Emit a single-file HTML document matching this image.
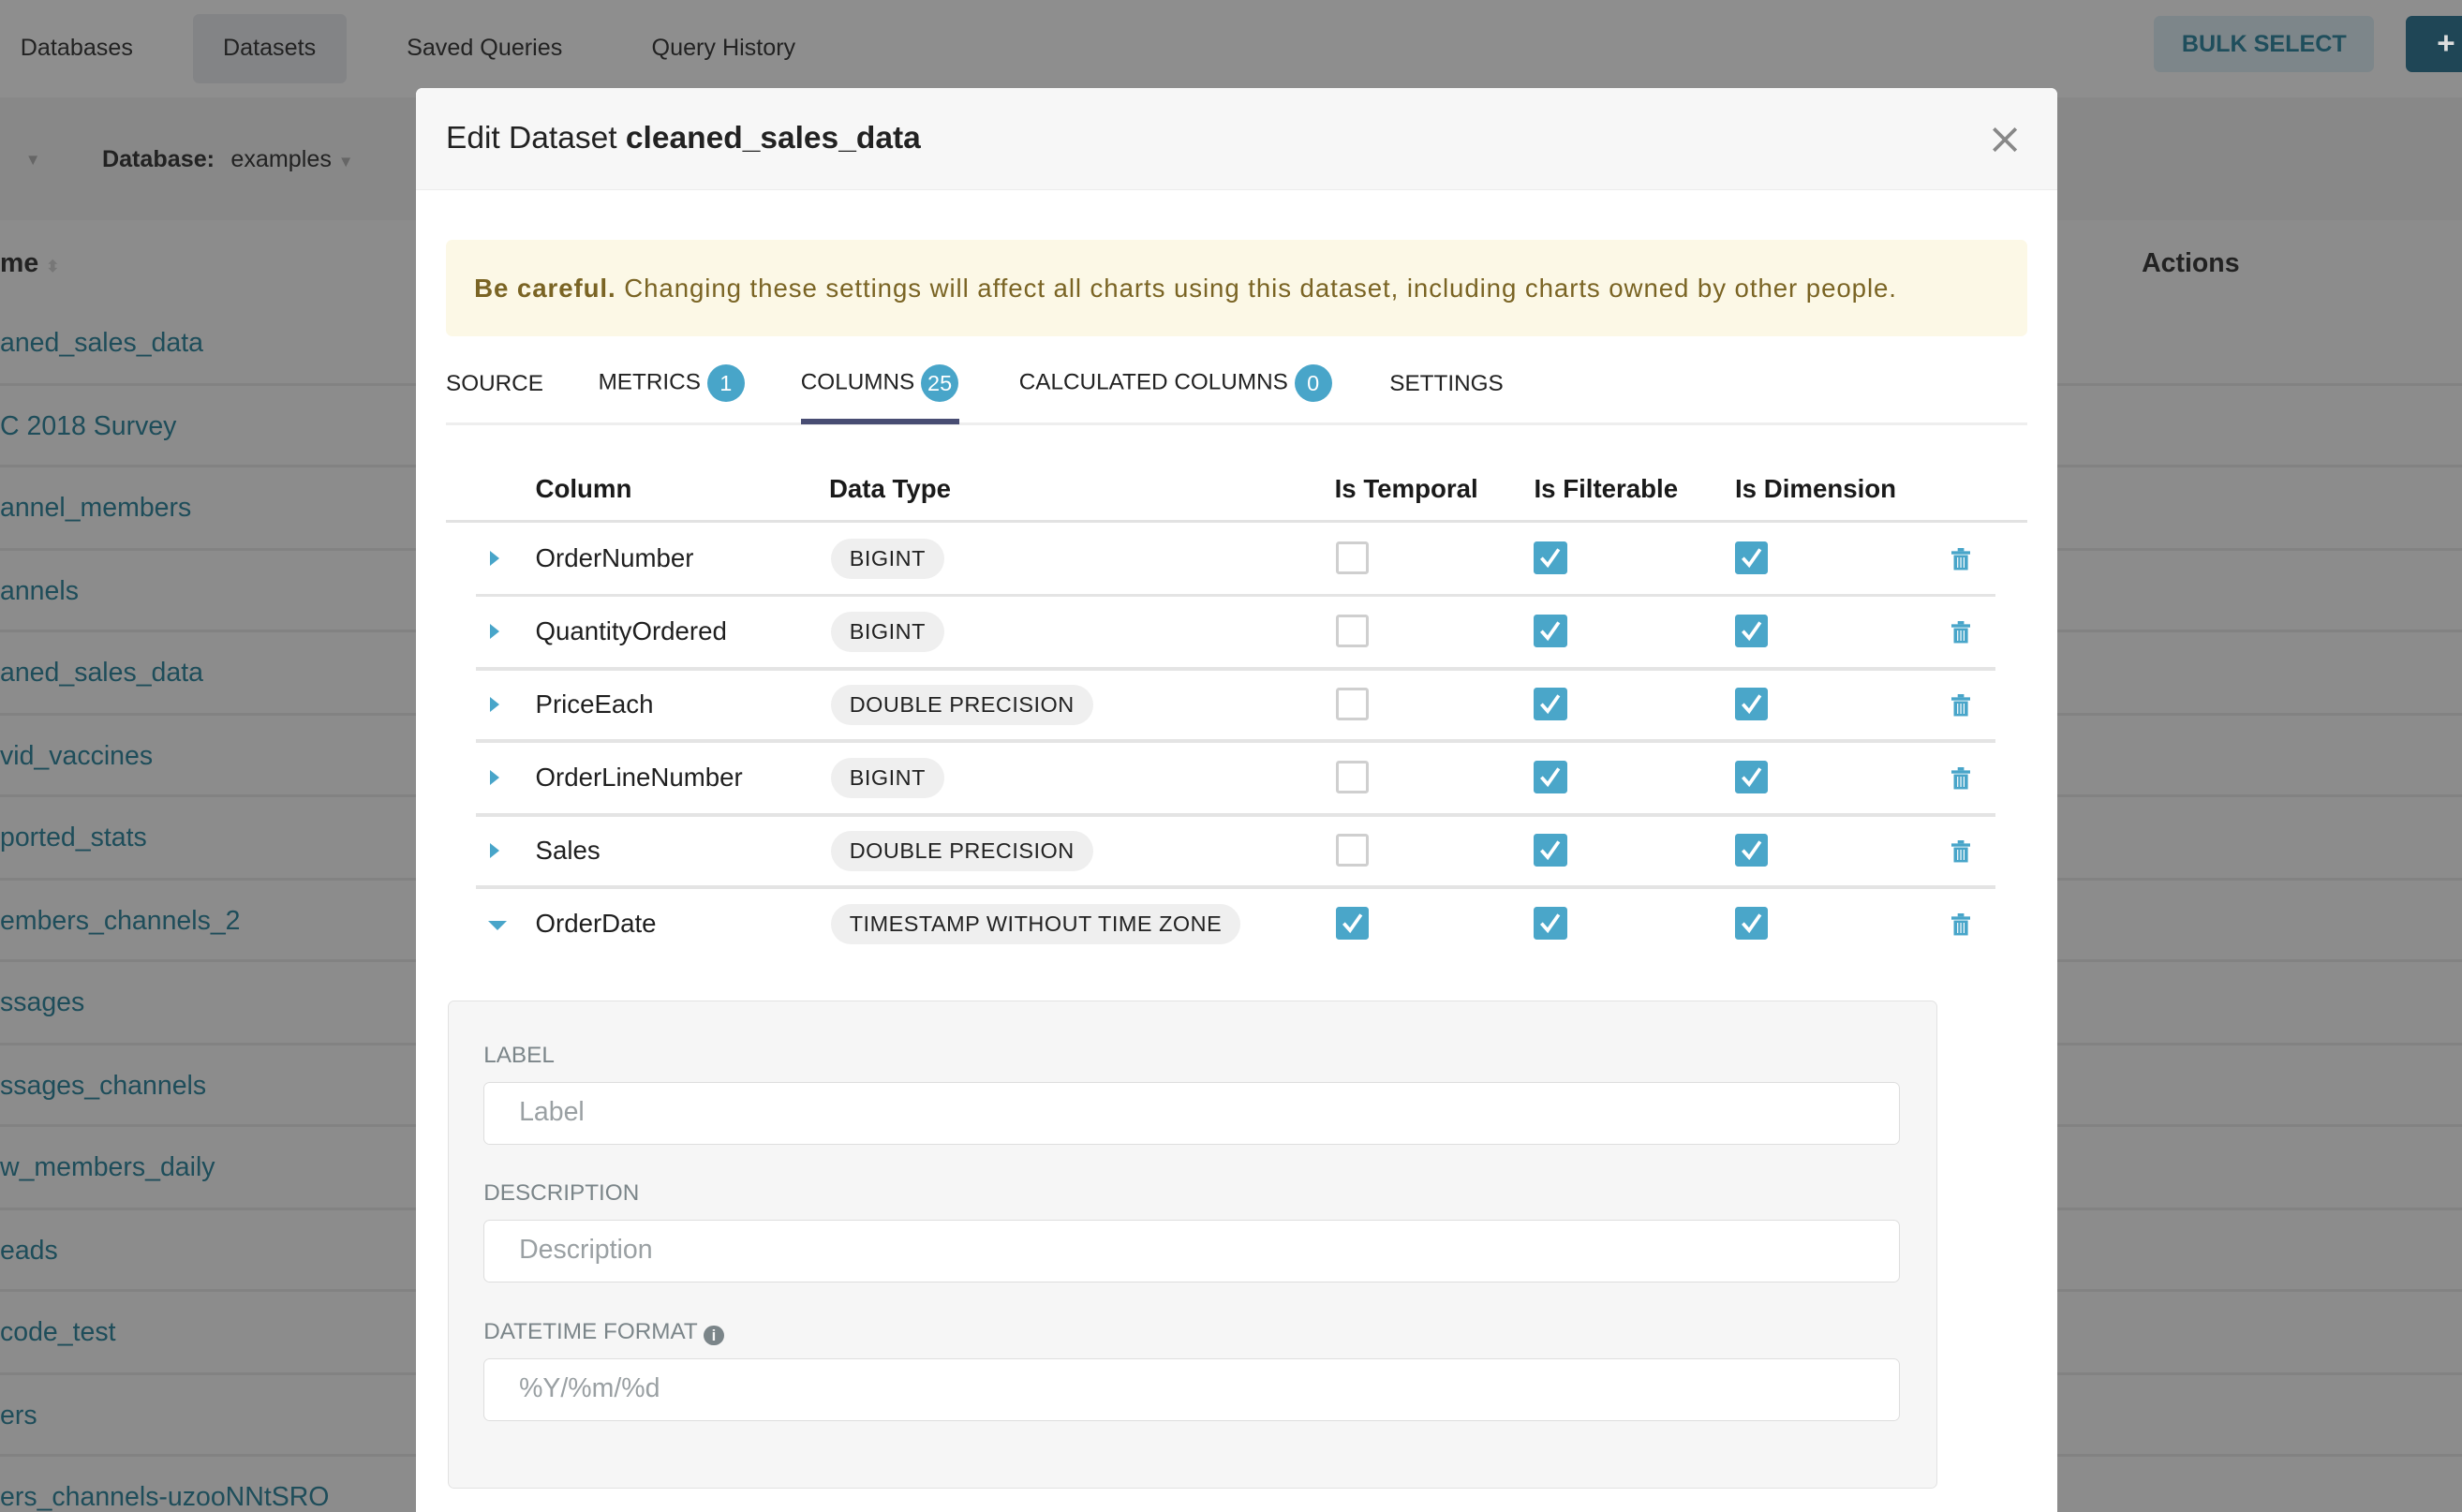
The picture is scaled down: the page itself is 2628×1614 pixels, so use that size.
<!DOCTYPE html>
<html><head><meta charset="utf-8"><style>
*{box-sizing:border-box;margin:0;padding:0}
html,body{width:2628px;height:1614px;overflow:hidden;background:#8c8c8c}
#w{zoom:1.67602;width:1568px;height:963px;position:relative;font-family:"Liberation Sans",sans-serif;color:#1a1a1a;overflow:hidden}
.a{position:absolute;white-space:nowrap}
.bgl{color:#1e4d5a;font-size:17px}
.line{position:absolute;left:0;width:1568px;height:2px;background:#828282}
.tab{font-size:14.5px;color:#222}
.badge{display:inline-block;width:24px;height:24px;border-radius:12px;background:#48a5c9;color:#fff;text-align:center;line-height:24px;font-size:14px;margin-left:4px;vertical-align:middle}
.th{font-weight:bold;font-size:16.5px;top:302px}
.pill{height:26px;padding:0 12px;border-radius:13px;background:#efefef;font-size:14px;line-height:26px;color:#222;letter-spacing:0.3px}
.cb{width:21px;height:21px;border-radius:2px}
.cb.off{border:2px solid #cfcfcf;background:#fff}
.cb.on{background:#4aa6c9}
.rl{position:absolute;left:303px;width:968px;height:2px;background:#e4e4e4}
.lbl{font-size:14.5px;color:#7b8589;left:308px}
.inp{left:308px;width:902px;height:40px;background:#fff;border:1px solid #dedede;border-radius:4px;font-size:17px;color:#9aa0a3;padding-left:22px;line-height:38px}
</style></head><body><div id="w">
<div class="a" style="left:0;top:0;width:1568px;height:62px;background:#8e8e8e"></div>
<div class="a" style="left:123px;top:9px;width:98px;height:44px;background:#838486;border-radius:4px"></div>
<div class="a" style="left:13px;top:22px;font-size:15px;color:#222">Databases</div>
<div class="a" style="left:142px;top:22px;font-size:15px;color:#222">Datasets</div>
<div class="a" style="left:259px;top:22px;font-size:15px;color:#222">Saved Queries</div>
<div class="a" style="left:415px;top:22px;font-size:15px;color:#222">Query History</div>
<div class="a" style="left:1372px;top:10px;width:140px;height:36px;background:#7d868a;border-radius:4px;color:#1f4e5c;font-size:15px;font-weight:bold;text-align:center;line-height:36px">BULK SELECT</div>
<div class="a" style="left:1532px;top:10px;width:50px;height:36px;background:#1f4656;border-radius:4px;color:#ddd;font-size:20px;font-weight:bold;line-height:36px;padding-left:20px">+</div>
<div class="a" style="left:0;top:62px;width:1568px;height:78px;background:#888"></div>
<div class="a" style="left:16px;top:96px;font-size:10px;color:#666">▼</div>
<div class="a" style="left:65px;top:93px;font-size:15px;font-weight:bold;color:#222">Database:</div>
<div class="a" style="left:147px;top:93px;font-size:15px;color:#222">examples <span style="font-size:10px;color:#666">▼</span></div>
<div class="a" style="left:0;top:158px;font-size:17px;font-weight:bold;color:#222">me <span style="font-size:10px;color:#777">⬍</span></div>
<div class="a" style="left:1364px;top:158px;font-size:17px;font-weight:bold;color:#222">Actions</div>
<div class="a bgl" style="left:0;top:209px">aned_sales_data</div>
<div class="a bgl" style="left:0;top:262px">C 2018 Survey</div>
<div class="a bgl" style="left:0;top:314px">annel_members</div>
<div class="a bgl" style="left:0;top:367px">annels</div>
<div class="a bgl" style="left:0;top:419px">aned_sales_data</div>
<div class="a bgl" style="left:0;top:472px">vid_vaccines</div>
<div class="a bgl" style="left:0;top:524px">ported_stats</div>
<div class="a bgl" style="left:0;top:577px">embers_channels_2</div>
<div class="a bgl" style="left:0;top:629px">ssages</div>
<div class="a bgl" style="left:0;top:682px">ssages_channels</div>
<div class="a bgl" style="left:0;top:734px">w_members_daily</div>
<div class="a bgl" style="left:0;top:787px">eads</div>
<div class="a bgl" style="left:0;top:839px">code_test</div>
<div class="a bgl" style="left:0;top:892px">ers</div>
<div class="a bgl" style="left:0;top:944px">ers_channels-uzooNNtSRO</div>
<div class="line" style="top:244px"></div>
<div class="line" style="top:296px"></div>
<div class="line" style="top:349px"></div>
<div class="line" style="top:401px"></div>
<div class="line" style="top:454px"></div>
<div class="line" style="top:506px"></div>
<div class="line" style="top:559px"></div>
<div class="line" style="top:611px"></div>
<div class="line" style="top:664px"></div>
<div class="line" style="top:716px"></div>
<div class="line" style="top:769px"></div>
<div class="line" style="top:821px"></div>
<div class="line" style="top:874px"></div>
<div class="line" style="top:926px"></div>

<div class="a" style="left:265px;top:56px;width:1045px;height:920px;background:#fff;border-radius:4px 4px 0 0"></div>
<div class="a" style="left:265px;top:56px;width:1045px;height:65px;background:#f7f7f7;border-bottom:1px solid #ececec;border-radius:4px 4px 0 0"></div>
<div class="a" style="left:284px;top:77px;font-size:20px;color:#222">Edit Dataset <b>cleaned_sales_data</b></div>
<svg class="a" style="left:1268px;top:80px" width="18" height="18" viewBox="0 0 18 18"><path d="M2 2L16 16M16 2L2 16" stroke="#888" stroke-width="2.2"/></svg>
<div class="a" style="left:284px;top:153px;width:1007px;height:61px;background:#fcf8e6;border-radius:4px"></div>
<div class="a" style="left:302px;top:174px;font-size:16.5px;color:#7a6424;letter-spacing:0.55px"><b>Be careful.</b> Changing these settings will affect all charts using this dataset, including charts owned by other people.</div>
<div class="a tab" style="left:284px;top:236px">SOURCE</div>
<div class="a tab" style="left:381px;top:232px">METRICS<span class="badge">1</span></div>
<div class="a tab" style="left:510px;top:232px">COLUMNS<span class="badge">25</span></div>
<div class="a tab" style="left:649px;top:232px">CALCULATED COLUMNS<span class="badge">0</span></div>
<div class="a tab" style="left:885px;top:236px">SETTINGS</div>
<div class="a" style="left:284px;top:269px;width:1007px;height:2px;background:#eee"></div>
<div class="a" style="left:510px;top:267px;width:101px;height:3px;background:#484d73"></div>

<div class="a th" style="left:341px">Column</div>
<div class="a th" style="left:528px">Data Type</div>
<div class="a th" style="left:850px">Is Temporal</div>
<div class="a th" style="left:977px">Is Filterable</div>
<div class="a th" style="left:1105px">Is Dimension</div>
<div class="a" style="left:284px;top:331px;width:1007px;height:2px;background:#e2e2e2"></div>
<div class="rl" style="top:378px"></div>
<div class="rl" style="top:425px"></div>
<div class="rl" style="top:471px"></div>
<div class="rl" style="top:518px"></div>
<div class="rl" style="top:564px"></div>

<div id="rows"></div>
<script>
var rows=[["OrderNumber","BIGINT",0],["QuantityOrdered","BIGINT",0],["PriceEach","DOUBLE PRECISION",0],["OrderLineNumber","BIGINT",0],["Sales","DOUBLE PRECISION",0],["OrderDate","TIMESTAMP WITHOUT TIME ZONE",1]];
var h="";
var chk='<svg width="21" height="21" viewBox="0 0 21 21" style="display:block"><path d="M5 10.5L9 15L16 5" stroke="#fff" stroke-width="2.2" fill="none"/></svg>';
var trash='<svg width="12" height="14" viewBox="0 0 12 14"><rect x="0" y="2" width="12" height="2" fill="#48a5c9"/><rect x="4" y="0" width="4" height="2" fill="#48a5c9"/><path d="M1.5 4.5H10.5V14H1.5Z" fill="#48a5c9"/><path d="M4 6V12.5M6 6V12.5M8 6V12.5" stroke="#fff" stroke-width="0.7"/></svg>';
rows.forEach(function(r,i){
 var y=356+i*46.5;
 if(i<5) h+='<div class="a" style="left:312px;top:'+(y-5)+'px;width:0;height:0;border-top:5px solid transparent;border-bottom:5px solid transparent;border-left:6px solid #48a5c9"></div>';
 else h+='<div class="a" style="left:311px;top:'+(y-2)+'px;width:0;height:0;border-left:6px solid transparent;border-right:6px solid transparent;border-top:6px solid #48a5c9"></div>';
 h+='<div class="a" style="left:341px;top:'+(y-10)+'px;font-size:16.5px;color:#1f1f1f">'+r[0]+'</div>';
 h+='<div class="a pill" style="left:529px;top:'+(y-13)+'px">'+r[1]+'</div>';
 h+='<div class="a cb '+(r[2]?'on':'off')+'" style="left:851px;top:'+(y-11)+'px">'+(r[2]?chk:'')+'</div>';
 h+='<div class="a cb on" style="left:977px;top:'+(y-11)+'px">'+chk+'</div>';
 h+='<div class="a cb on" style="left:1105px;top:'+(y-11)+'px">'+chk+'</div>';
 h+='<div class="a" style="left:1243px;top:'+(y-7)+'px">'+trash+'</div>';
});
document.getElementById('rows').innerHTML=h;
</script>

<div class="a" style="left:285px;top:637px;width:949px;height:311px;background:#f6f6f6;border:1px solid #e2e2e2;border-radius:4px"></div>
<div class="a lbl" style="top:664px">LABEL</div>
<div class="a inp" style="top:689px">Label</div>
<div class="a lbl" style="top:752px">DESCRIPTION</div>
<div class="a inp" style="top:777px">Description</div>
<div class="a lbl" style="top:840px">DATETIME FORMAT <span style="display:inline-block;width:13px;height:13px;border-radius:7px;background:#7b8589;color:#f6f6f6;font-size:10px;line-height:13px;text-align:center;font-weight:bold;vertical-align:-1px">i</span></div>
<div class="a inp" style="top:865px">%Y/%m/%d</div>
</div></body></html>
